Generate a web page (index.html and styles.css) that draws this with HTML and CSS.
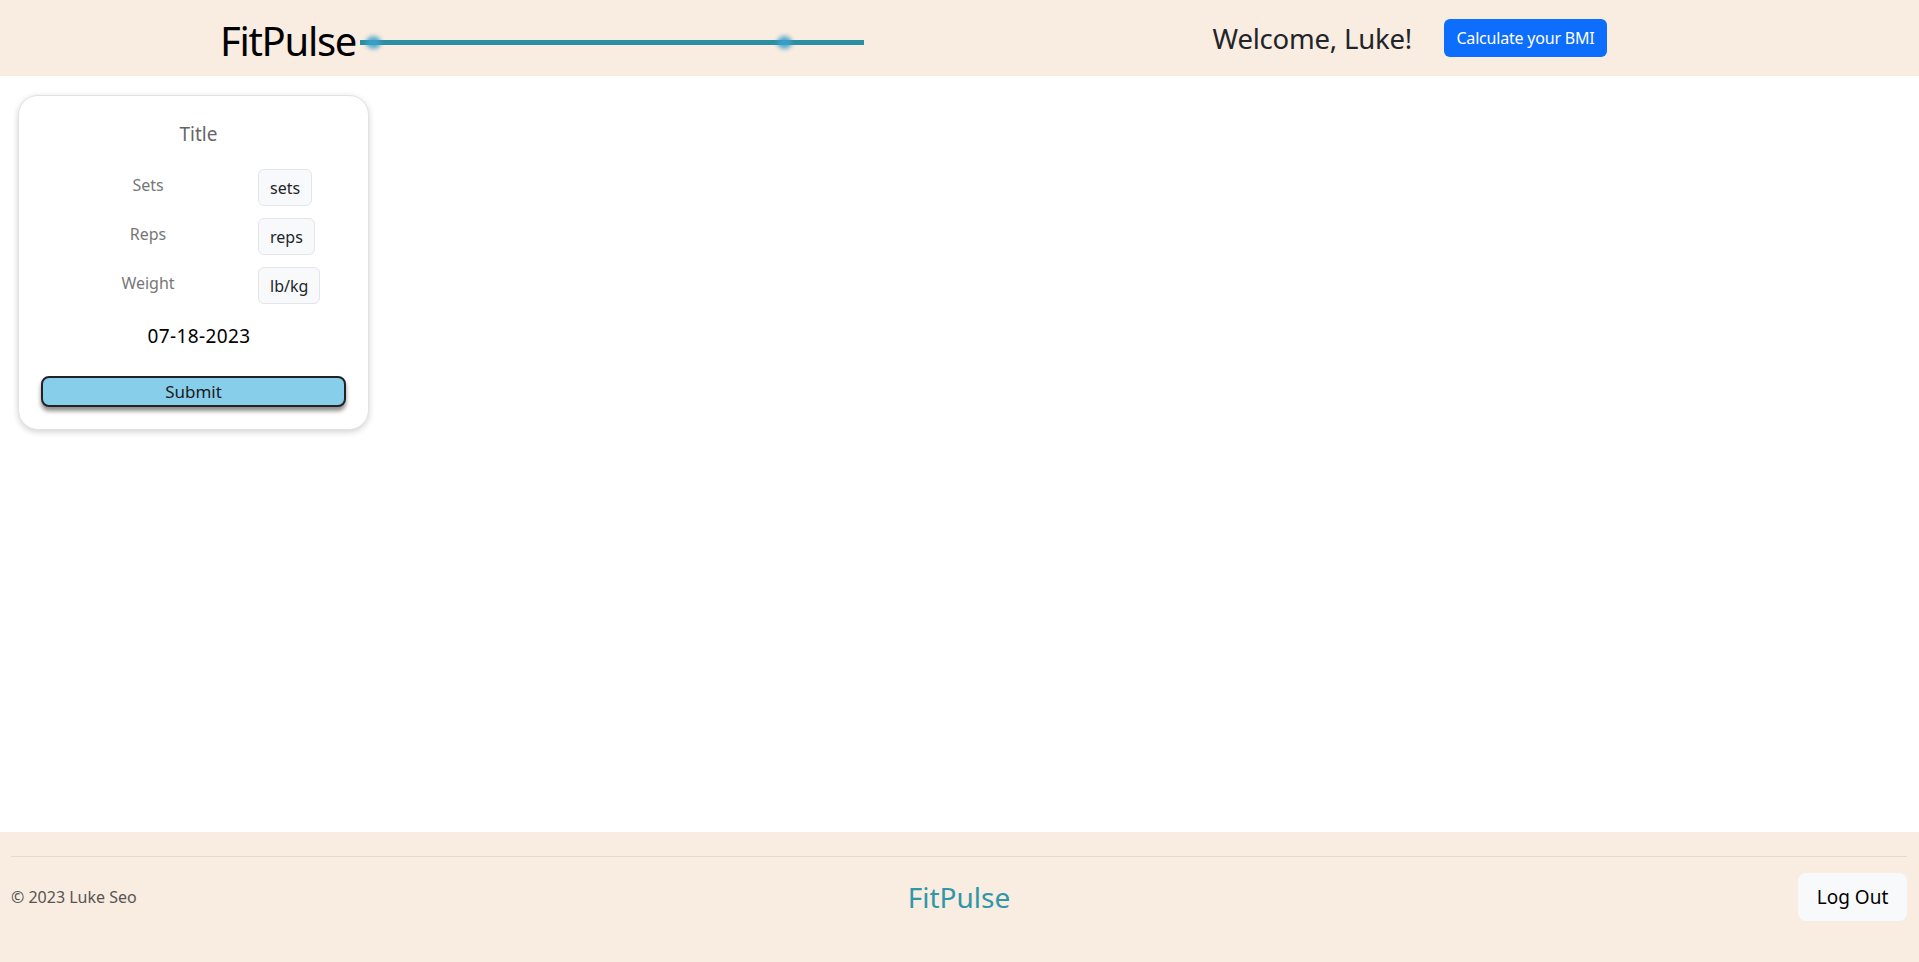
FILE: index.html
```html
<!DOCTYPE html>
<html lang="en">
<head>
<meta charset="utf-8">
<title>FitPulse</title>
<link rel="stylesheet" href="styles.css">
</head>
<body>
<div class="page">
  <header class="topbar">
    <div class="brand">
      <span class="brand-name">FitPulse</span>
      <div class="pulse">
        <span class="pulse-dot dot-a"></span>
        <span class="pulse-dot dot-b"></span>
      </div>
    </div>
    <div class="topbar-right">
      <span class="welcome">Welcome, Luke!</span>
      <button class="btn-bmi">Calculate your BMI</button>
    </div>
  </header>

  <main class="content">
    <form class="card">
      <div class="card-title">Title</div>
      <div class="field-list">
        <div class="field">
          <span class="field-label">Sets</span>
          <span class="field-input">sets</span>
        </div>
        <div class="field">
          <span class="field-label">Reps</span>
          <span class="field-input">reps</span>
        </div>
        <div class="field">
          <span class="field-label">Weight</span>
          <span class="field-input">lb/kg</span>
        </div>
      </div>
      <div class="card-date">07-18-2023</div>
      <button type="button" class="btn-submit">Submit</button>
    </form>
  </main>

  <footer class="footer">
    <hr class="footer-rule">
    <div class="footer-row">
      <span class="copyright">© 2023 Luke Seo</span>
      <span class="footer-brand">FitPulse</span>
      <div class="footer-actions">
        <button class="btn-logout">Log Out</button>
      </div>
    </div>
  </footer>
</div>
</body>
</html>
```

FILE: styles.css
```css
* { box-sizing: border-box; }

html, body {
  margin: 0;
  padding: 0;
  height: 100%;
}

body {
  font-family: "Noto Sans", "Open Sans", sans-serif;
  color: #212529;
  background: #ffffff;
}

.page {
  min-height: 962px;
  display: flex;
  flex-direction: column;
}

/* ---------- header ---------- */
.topbar {
  height: 76px;
  background: #f9ece0;
  display: flex;
  align-items: center;
  justify-content: space-between;
  padding: 0 312px 0 220px;
}

.brand {
  display: flex;
  align-items: center;
}

.brand-name {
  font-size: 40px;
  color: #000;
  line-height: 1;
  letter-spacing: -1.3px;
  margin-top: 6px;
}

.pulse {
  position: relative;
  width: 504px;
  height: 5px;
  margin-left: 4px;
  margin-top: 8px;
  background: #2a8fa3;
}

.pulse-dot {
  position: absolute;
  top: -4px;
  width: 15px;
  height: 13px;
  border-radius: 50%;
  background: rgba(60, 160, 205, 0.85);
  filter: blur(2px);
}

.dot-a { left: 6px; }
.dot-b { left: 417px; }

.topbar-right {
  display: flex;
  align-items: center;
  gap: 32px;
}

.welcome {
  font-size: 27.5px;
  color: #212529;
  letter-spacing: -0.2px;
}

.btn-bmi {
  font-family: inherit;
  font-size: 16px;
  color: #fff;
  background: #0d6efd;
  border: none;
  border-radius: 6px;
  height: 38px;
  width: 163px;
  padding: 0;
  letter-spacing: -0.2px;
}

/* ---------- content ---------- */
.content {
  flex: 1;
  padding: 19px 0 0 18px;
}

.card {
  width: 351px;
  border: 1px solid #e2e2e2;
  border-radius: 20px;
  box-shadow: 0 2px 6px rgba(0,0,0,0.18);
  padding: 26px 22px 22px;
  background: #fff;
  display: flex;
  flex-direction: column;
}

.card-title {
  text-align: center;
  font-size: 19px;
  line-height: 24px;
  color: #666;
  margin-left: 10px;
}

.field-list {
  margin-top: 23px;
  display: flex;
  flex-direction: column;
  gap: 12px;
}

.field {
  display: grid;
  grid-template-columns: 220px auto;
  margin-left: -3px;
  align-items: center;
}

.field-label {
  text-align: center;
  font-size: 16px;
  color: #777;
  padding-bottom: 5px;
}

.field-input {
  justify-self: start;
  height: 37px;
  padding: 0 11px;
  display: flex;
  align-items: center;
  font-size: 16px;
  color: #212529;
  background: #f8f9fa;
  border: 1px solid #e3e5e8;
  border-radius: 6px;
}

.card-date {
  margin-top: 20px;
  text-align: center;
  font-size: 19px;
  line-height: 24px;
  letter-spacing: 0.4px;
  color: #000;
  margin-left: 11px;
}

.btn-submit {
  margin-top: 28px;
  height: 31px;
  width: 100%;
  font-family: inherit;
  font-size: 17px;
  color: #1b1b1b;
  background: #87ceeb;
  border: 2px solid #222;
  border-radius: 8px;
  box-shadow: 0 4px 4px rgba(0,0,0,0.45);
  padding: 0;
}

/* ---------- footer ---------- */
.footer {
  background: #f9ece0;
  padding: 24px 12px 41px 11px;
}

.footer-rule {
  margin: 0;
  border: none;
  border-top: 1px solid #e3d9d2;
}

.footer-row {
  margin-top: 16px;
  display: grid;
  grid-template-columns: 1fr auto 1fr;
  align-items: center;
  height: 48px;
}

.copyright {
  font-size: 16px;
  color: #555;
}

.footer-brand {
  font-size: 28px;
  color: #3096aa;
}

.footer-actions {
  display: flex;
  justify-content: flex-end;
}

.btn-logout {
  font-family: inherit;
  font-size: 19px;
  color: #000;
  background: #f8f9fa;
  border: none;
  border-radius: 8px;
  height: 48px;
  width: 109px;
  padding: 0;
}
```
